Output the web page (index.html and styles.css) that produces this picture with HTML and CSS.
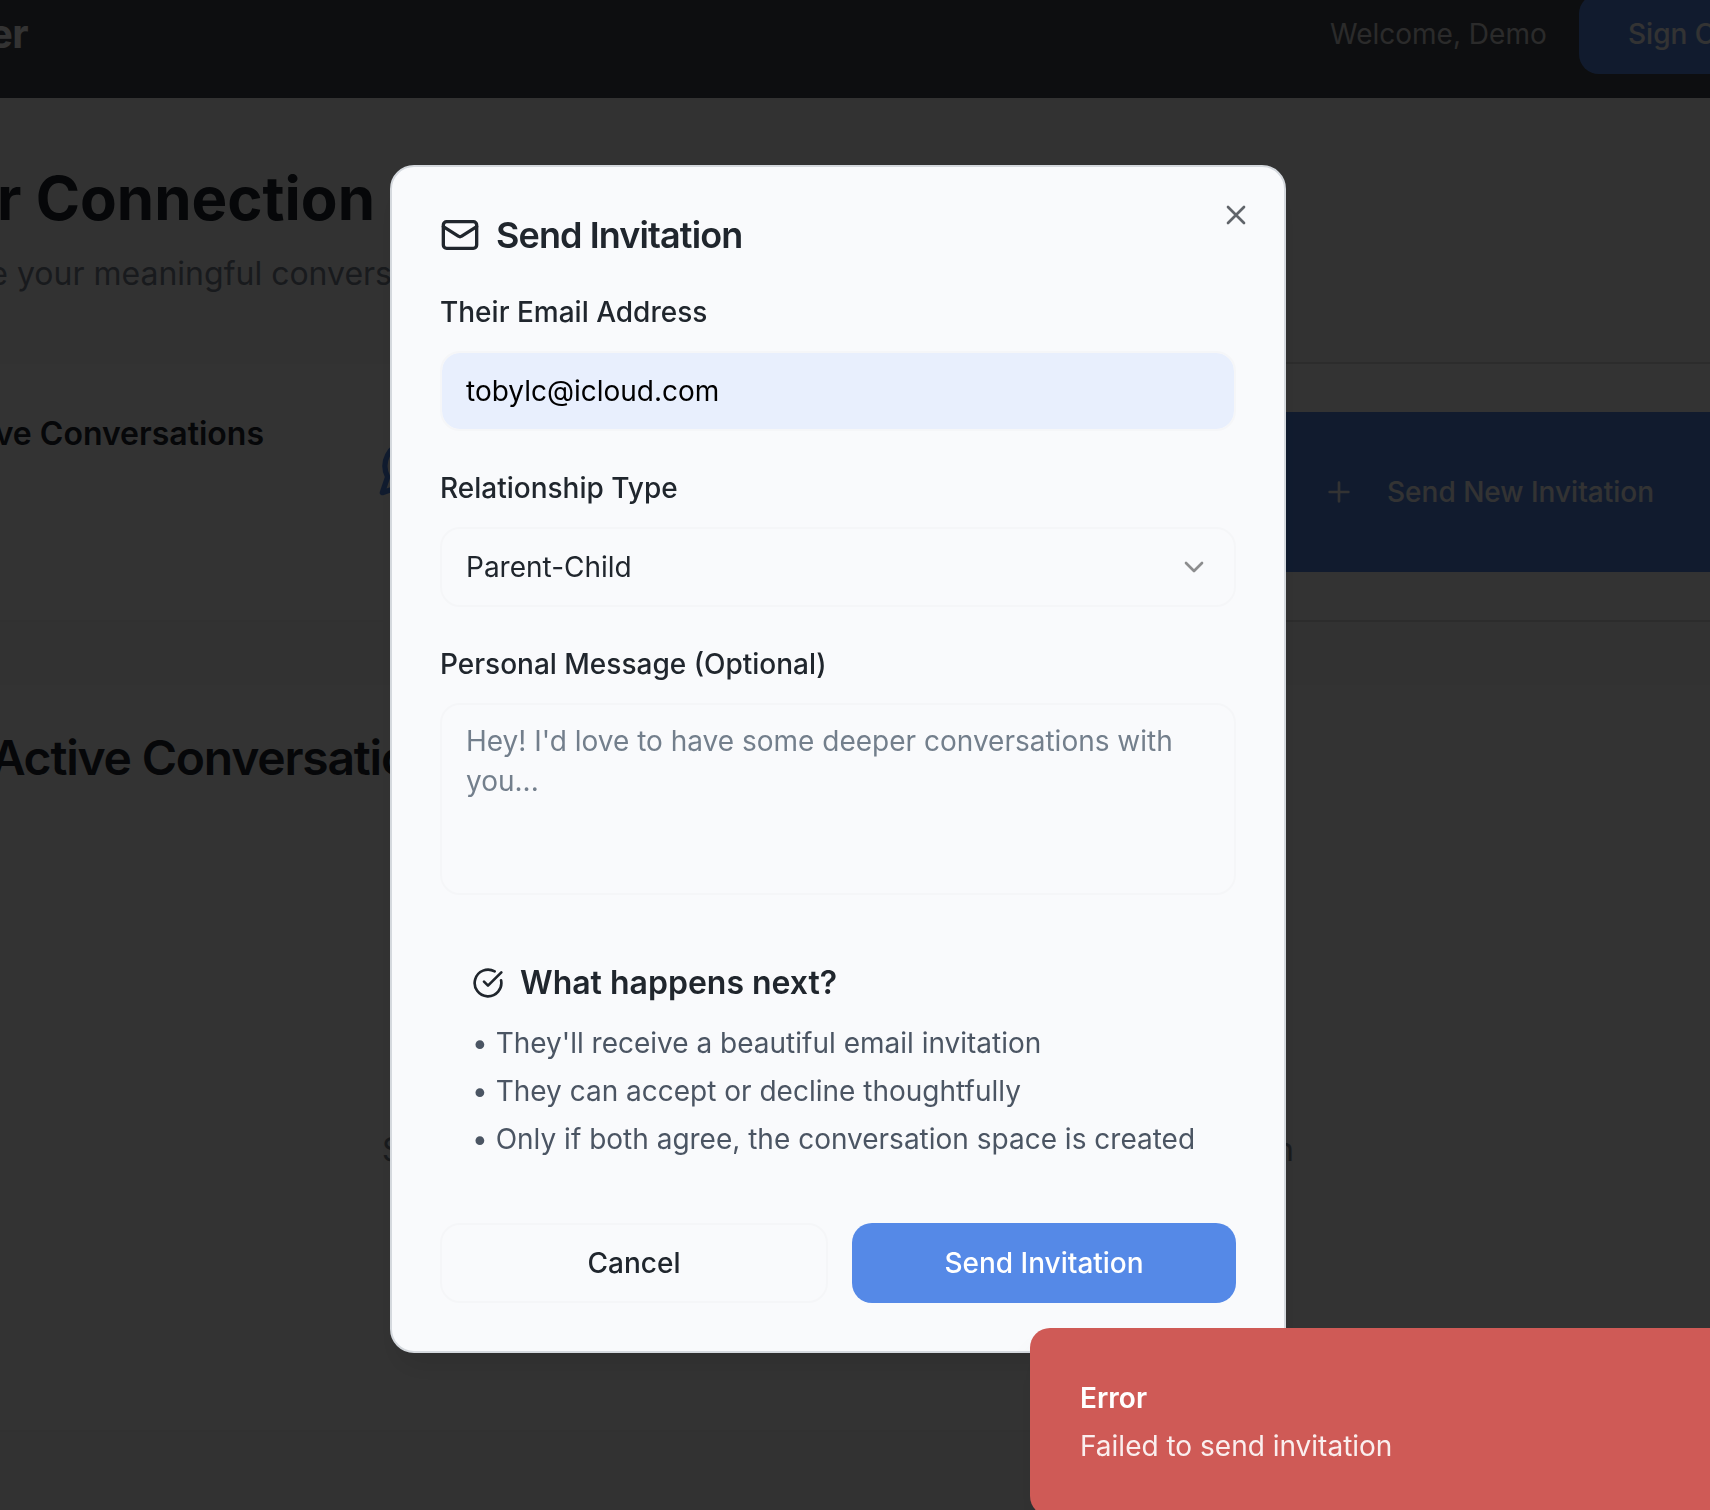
FILE: index.html
```html
<!DOCTYPE html>
<html lang="en">
<head>
<meta charset="utf-8">
<title>Send Invitation</title>
<link rel="stylesheet" href="styles.css">
</head>
<body>
<div class="page">
  <header class="topbar">
    <span class="brand"><span>Deeper</span></span>
    <div class="account">
      <span class="welcome">Welcome, Demo</span>
      <button class="signout">Sign Out</button>
    </div>
  </header>
  <main class="main">
    <section class="intro">
      <h1><span>Your Connection</span></h1>
      <p><span>Continue your meaningful convers</span></p>
    </section>
    <section class="cards">
      <div class="card stat">
        <h3><span>Active Conversations</span></h3>
        <svg class="bubble" viewBox="0 0 24 24"><path d="M7.9 20A9 9 0 1 0 4 16.1L2 22Z"/></svg>
      </div>
      <div class="card invite">
        <button class="invite-btn">
          <svg class="plus" viewBox="0 0 24 24"><path d="M5 12h14M12 5v14"/></svg>
          <span>Send New Invitation</span>
        </button>
      </div>
    </section>
    <section class="panel">
      <h2><span>Active Conversatio</span></h2>
      <p class="empty">Send an invitation to begin your first deep conversation</p>
    </section>
  </main>
</div>
<div class="overlay">
  <div class="modal">
    <svg class="close" viewBox="0 0 24 24"><path d="M18 6 6 18M6 6l12 12"/></svg>
    <h2 class="modal-title">
      <svg class="mail" viewBox="0 0 24 24"><rect x="2" y="4" width="20" height="16" rx="2"/><path d="m22 7-8.97 5.7a1.94 1.94 0 0 1-2.06 0L2 7"/></svg>
      <span>Send Invitation</span>
    </h2>
    <div class="field">
      <label>Their Email Address</label>
      <div class="input filled">tobylc@icloud.com</div>
    </div>
    <div class="field">
      <label>Relationship Type</label>
      <div class="input select">
        <span>Parent-Child</span>
        <svg class="chevron" viewBox="0 0 24 24"><path d="m6 9 6 6 6-6"/></svg>
      </div>
    </div>
    <div class="field">
      <label>Personal Message (Optional)</label>
      <div class="input textarea">Hey! I'd love to have some deeper conversations with you...</div>
    </div>
    <div class="next">
      <h4>
        <svg class="check" viewBox="0 0 24 24"><path d="M21.801 10A10 10 0 1 1 17 3.335"/><path d="m9 11 3 3L22 4"/></svg>
        <span>What happens next?</span>
      </h4>
      <p>• They'll receive a beautiful email invitation</p>
      <p>• They can accept or decline thoughtfully</p>
      <p>• Only if both agree, the conversation space is created</p>
    </div>
    <div class="actions">
      <button class="cancel">Cancel</button>
      <button class="send">Send Invitation</button>
    </div>
  </div>
</div>
<div class="toast">
  <strong>Error</strong>
  <span>Failed to send invitation</span>
</div>
</body>
</html>
```
FILE: styles.css
```css
* { box-sizing: border-box; margin: 0; padding: 0; }
body {
  width: 1710px;
  height: 1510px;
  overflow: hidden;
  background: #f9f9f9;
  font-family: Inter, "Liberation Sans", sans-serif;
  font-size: 28px;
  line-height: 40px;
  color: #20262d;
}
button { font: inherit; border: 0; color: inherit; white-space: nowrap; }
svg { fill: none; stroke: currentColor; stroke-width: 2; stroke-linecap: round; stroke-linejoin: round; flex: none; }

/* Page behind the dialog */
.page { height: 1510px; overflow: hidden; white-space: nowrap; }
.topbar { height: 98px; background: #41464f; display: flex; justify-content: space-between; color: #fff; }
.brand { width: 28px; display: flex; justify-content: flex-end; font-size: 40px; font-weight: 700; line-height: 68px; letter-spacing: -0.5px; }
.account { display: flex; width: 380px; margin-top: -6px; height: 80px; align-items: center; gap: 32px; flex: none; }
.welcome { color: #d6d6d6; width: 217px; flex: none; }
.signout { width: 200px; height: 80px; flex: none; border-radius: 20px; background: #5589e7; font-weight: 500; text-align: left; padding-left: 49px; }
.intro { height: 264px; padding-top: 66px; }
.intro h1 { width: 375px; display: flex; justify-content: flex-end; font-size: 60px; line-height: 68px; font-weight: 700; }
.intro p { width: 392px; margin-top: 22px; display: flex; justify-content: flex-end; font-size: 32px; color: #7b8390; }
.cards { height: 260px; display: grid; grid-template-columns: 600px 1fr; gap: 48px; }
.card { background: #fcfcfc; }
.stat { display: flex; border-top: 2px solid #f9f9f9; border-bottom: 2px solid #f6f6f6; }
.stat h3 { width: 264px; margin-top: 50px; display: flex; justify-content: flex-end; flex: none; font-size: 32px; font-weight: 600; }
.bubble { width: 64px; height: 64px; margin: 70px 0 0 113px; color: #5589e7; }
.invite { border: solid #dcdcdc; border-width: 2px 0; padding: 48px 0; }
.invite-btn { display: flex; align-items: center; gap: 32px; width: 100%; height: 160px; padding-left: 675px; background: #5589e7; color: #fff; font-weight: 500; }
.plus { width: 32px; height: 32px; }
.panel { margin-top: 63px; height: 747px; background: #fcfcfc; border-bottom: 2px solid #f4f4f4; padding-top: 48px; }
.panel h2 { width: 409px; display: flex; justify-content: flex-end; font-size: 48px; line-height: 50px; font-weight: 600; letter-spacing: -1.2px; }
.empty { width: 912px; margin: 347px 0 0 382px; font-size: 32px; color: #7b8390; text-align-last: justify; }

/* Dialog */
.overlay { position: fixed; inset: 0; background: rgba(0, 0, 0, 0.8); }
.modal { position: absolute; left: 390px; top: 165px; width: 896px; height: 1188px; padding: 48px; border: 2px solid #d5d9de; border-radius: 24px; background: #f9fafc; box-shadow: 0 20px 30px -6px rgba(0, 0, 0, 0.1); }
.close { position: absolute; top: 32px; right: 32px; width: 32px; height: 32px; opacity: 0.7; }
.modal-title { display: flex; align-items: center; gap: 16px; height: 40px; font-size: 36px; font-weight: 600; letter-spacing: -0.9px; }
.mail { width: 40px; height: 40px; }
.field { margin-top: 37px; }
.field label { display: block; font-weight: 500; }
.input { height: 80px; margin-top: 19px; padding: 18px 24px; border: 2px solid #f5f6f8; border-radius: 20px; }
.filled { background: #e8effd; background-clip: padding-box; color: #000; }
.select { display: flex; justify-content: space-between; align-items: center; }
.chevron { width: 32px; height: 32px; opacity: 0.5; color: #222; }
.textarea { height: 192px; padding: 16px 24px; color: #737f8c; }
.next { margin: 68px 32px 0; color: #4b5563; white-space: nowrap; }
.next h4 { display: flex; align-items: center; gap: 16px; font-size: 32px; font-weight: 600; color: #20262d; margin-bottom: 20px; }
.check { width: 32px; height: 32px; }
.next p { margin-bottom: 8px; font-feature-settings: "calt" 0; }
.actions { display: grid; grid-template-columns: 388px 384px; gap: 24px; margin-top: 64px; }
.actions button { height: 80px; border-radius: 20px; font-weight: 500; }
.actions .cancel { border: 2px solid #f5f6f8; background: transparent; }
.actions .send { background: #5589e7; color: #fff; }

/* Notification */
.toast { position: fixed; left: 1030px; top: 1328px; width: 760px; height: 188px; padding: 50px; border-radius: 20px; background: #cf5a56; color: #fff; display: flex; flex-direction: column; gap: 8px; box-shadow: 0 20px 30px -6px rgba(0, 0, 0, 0.1); }
.toast strong { font-weight: 600; }
.toast span { opacity: 0.9; }
```
